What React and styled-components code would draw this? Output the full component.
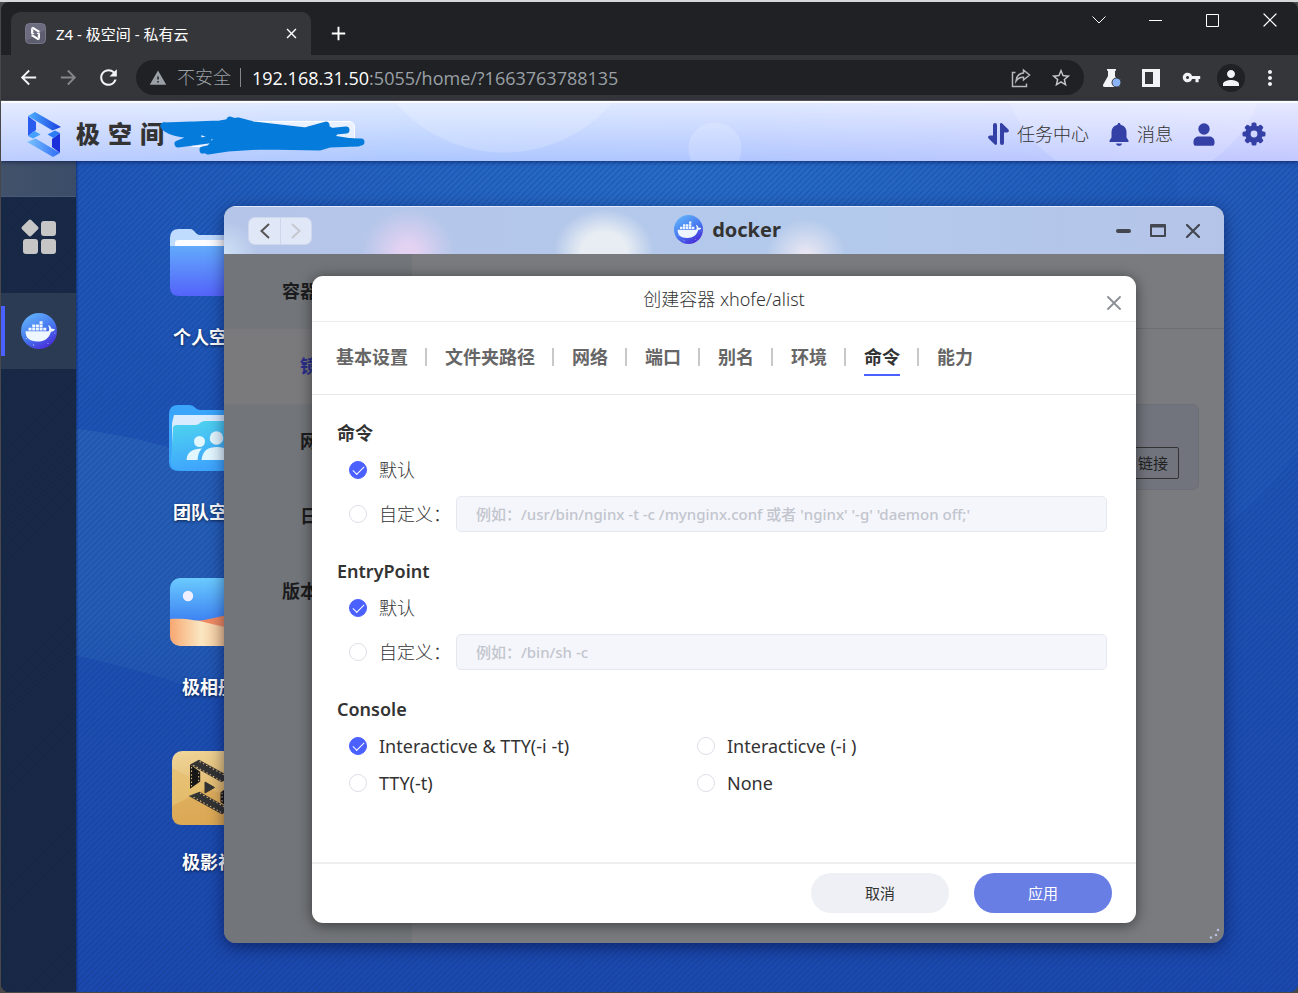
import React, { useState } from 'react';
import styled, { createGlobalStyle } from 'styled-components';
import {
  MdAdd,
  MdArrowBack,
  MdArrowForward,
  MdClose,
  MdMoreVert,
  MdPerson,
  MdRefresh,
  MdStarBorder,
  MdVpnKey,
  MdWarning,
} from 'react-icons/md';

const GlobalStyle = createGlobalStyle`
  * {
    box-sizing: border-box;
  }

  body {
    margin: 0;
    background: #48484a;
    color: #333;
    font-family: 'Noto Sans', 'Noto Sans CJK SC', sans-serif;
    font-size: 18px;
    line-height: 24px;
  }

  button,
  input {
    font: inherit;
    color: inherit;
  }

  button {
    padding: 0;
    border: none;
    background: none;
    cursor: pointer;
  }

  svg {
    display: block;
    flex: none;
  }
`;

/* ---------- browser ---------- */

const Screen = styled.div`
  display: flex;
  flex-direction: column;
  min-height: 100vh;
  padding: 0 0 1px 1px;
  border-top: 2px solid #d5d8d8;
`;

const Browser = styled.div`
  flex: 1;
  display: flex;
  flex-direction: column;
  overflow: hidden;
  border-radius: 8px;
  background: #202124;
`;

const TabStrip = styled.div`
  display: flex;
  align-items: flex-end;
  height: 53px;
  padding-left: 10px;
  color: #fff;
`;

const BrowserTab = styled.div`
  display: flex;
  align-items: center;
  width: 300px;
  height: 43px;
  padding: 0 12px 0 14px;
  border-radius: 9px 9px 0 0;
  background: #35363a;
`;

const TabTitle = styled.span`
  flex: 1;
  margin-left: 10px;
  font-size: 15px;
`;

const IconButton = styled.button`
  display: flex;
  align-items: center;
  justify-content: center;
  width: ${(p) => p.$width || 28}px;
  height: ${(p) => p.$height || 28}px;
  color: ${(p) => p.$color || 'inherit'};
`;

const NewTab = styled.div`
  display: flex;
  align-items: center;
  height: 43px;
  margin-left: 13px;
`;

const WindowControls = styled.div`
  display: flex;
  align-self: flex-start;
  margin-left: auto;
`;

const Toolbar = styled.div`
  display: flex;
  align-items: center;
  height: 46px;
  padding: 0 15px 0 13px;
  border-bottom: 1px solid #5c5d5f;
  background: #35363a;
  color: #f1f3f4;
`;

const NavButtons = styled.div`
  display: flex;
  gap: 12px;
`;

const AddressBar = styled.div`
  flex: 1;
  display: flex;
  align-items: center;
  height: 35px;
  margin: 0 13px 0 14px;
  padding: 0 9px 0 13px;
  border-radius: 18px;
  background: #202124;
  color: #9aa0a6;
  font-family: 'Open Sans', 'Noto Sans CJK SC', sans-serif;
  font-weight: 300;
`;

const Insecure = styled.span`
  margin-left: 10px;
  padding-right: 9px;
  border-right: 1px solid #80868b;
  line-height: 19px;
`;

const Url = styled.span`
  flex: 1;
  margin-left: 11px;
  font-weight: 400;
  b {
    color: #fff;
    font-weight: 400;
  }
`;

const Extensions = styled.div`
  display: flex;
  gap: 12px;
`;

const Avatar = styled.span`
  display: flex;
  align-items: center;
  justify-content: center;
  width: 28px;
  height: 28px;
  border-radius: 50%;
  background: #202124;
`;

/* ---------- NAS page ---------- */

const Header = styled.header`
  position: relative;
  display: flex;
  align-items: center;
  height: 60px;
  padding: 4px 32px 0 25px;
  border-top: 2px solid #fbfcff;
  background:
    radial-gradient(circle at 503px -93px, rgba(255, 255, 255, 0.18) 142px, transparent 143px),
    radial-gradient(circle at 714px 46px, rgba(255, 255, 255, 0.18) 26px, transparent 27px),
    radial-gradient(circle at calc(100% - 164px) -52px, rgba(255, 255, 255, 0.16) 134px, transparent 135px),
    linear-gradient(rgba(255, 255, 255, 0.6), rgba(255, 255, 255, 0)),
    linear-gradient(90deg, #bccdff 0%, #adc8ff 30%, #b0c6ff 55%, #c3c8ff 100%);
  box-shadow: 0 1px 4px rgba(0, 10, 60, 0.6);
  z-index: 2;
`;

const Brand = styled.div`
  display: flex;
  gap: 8px;
  margin-left: 14px;
  padding-bottom: 2px;
  color: #333;
  font-family: 'Noto Sans CJK SC', sans-serif;
  font-size: 24px;
  font-weight: 900;
`;

const DeviceName = styled.div`
  position: relative;
  width: 167px;
  height: 26px;
  margin-left: 24px;
  border: 1px solid #fff;
  border-radius: 6px;
  background: rgba(255, 255, 255, 0.6);
`;

const Scribble = styled.svg`
  position: absolute;
  left: -31px;
  top: -6px;
`;

const HeaderActions = styled.nav`
  display: flex;
  align-items: center;
  gap: 20px;
  margin-left: auto;
`;

const HeaderAction = styled.button`
  display: flex;
  align-items: center;
  gap: 8px;
  font-weight: 300;
  svg {
    color: #3440a5;
  }
  &:last-child {
    margin-left: 7px;
  }
`;

const Page = styled.div`
  flex: 1;
  display: flex;
`;

const Dock = styled.aside`
  display: flex;
  flex-direction: column;
  width: 75px;
  background:
    repeating-linear-gradient(135deg, transparent 0 3px, rgba(0, 0, 0, 0.06) 3px 4px),
    #182947;
  box-shadow: 1px 0 2px rgba(0, 0, 40, 0.4);
  z-index: 1;
`;

const DockTop = styled.div`
  height: 36px;
  border-bottom: 1px solid #45597a;
  background: linear-gradient(90deg, #42526b, #3a4c67);
`;

const DockApps = styled.button`
  display: flex;
  align-items: center;
  justify-content: center;
  height: 96px;
  padding-bottom: 16px;
`;

const DockItem = styled.button`
  display: flex;
  align-items: center;
  justify-content: center;
  height: 76px;
  background:
    linear-gradient(#4a60ff, #4a60ff) left center / 4px 50px no-repeat,
    #2c3b54;
`;

const Desktop = styled.main`
  position: relative;
  flex: 1;
  padding: 62px 0 0 93px;
  overflow: hidden;
  background: #1d50b4;
`;

const Wallpaper = styled.svg`
  position: absolute;
  left: 0;
  top: 0;
  width: 100%;
  height: 100%;
`;

const Shortcuts = styled.div`
  position: relative;
  display: flex;
  flex-direction: column;
  gap: 49px;
  width: 80px;
`;

const Shortcut = styled.button`
  display: flex;
  flex-direction: column;
  align-items: center;
  gap: 22px;
  color: #fff;
  font-weight: 700;
  white-space: nowrap;
  text-shadow: 0 1px 3px rgba(0, 0, 0, 0.6);
`;

/* ---------- docker window ---------- */

const AppWindow = styled.section`
  position: absolute;
  inset: 45px 74px 49px 148px;
  display: flex;
  flex-direction: column;
  overflow: hidden;
  border-radius: 12px;
  background: #797b7f;
`;

const WindowShadow = styled.div`
  position: absolute;
  inset: 45px 74px 49px 148px;
  border-radius: 12px;
  box-shadow: 0 4px 16px rgba(0, 0, 40, 0.5);
`;

const TitleBar = styled.div`
  display: grid;
  grid-template-columns: 1fr auto 1fr;
  align-items: center;
  height: 48px;
  padding: 0 18px 0 25px;
  border-top: 1px solid #dfe9fb;
  background:
    radial-gradient(ellipse 46px 44px at 184px 46px, #e3d2f2 20%, rgba(227, 210, 242, 0)),
    radial-gradient(ellipse 50px 42px at 380px 44px, #e8edf3 45%, rgba(232, 237, 243, 0)),
    radial-gradient(ellipse 40px 36px at 582px 48px, #e6e5f2 10%, rgba(230, 229, 242, 0)),
    radial-gradient(ellipse 34px 34px at 0 48px, #cfe2f5, rgba(207, 226, 245, 0)),
    linear-gradient(90deg, #b5c5e9, #b3caec 60%, #b4c4e8);
`;

const History = styled.div`
  display: flex;
  justify-self: start;
  border-radius: 6px;
  background: #e0e7f7;
  box-shadow: 0 0 0 1px #cfd9ee;
  button + button {
    border-left: 1px solid #cdd6ea;
  }
`;

const AppTitle = styled.h1`
  display: flex;
  align-items: center;
  gap: 9px;
  margin: 0;
  padding-bottom: 2px;
  font-size: 20px;
  font-weight: 700;
`;

const TitleButtons = styled.div`
  display: flex;
  gap: 9px;
  justify-self: end;
  color: #43474f;
`;

const WindowBody = styled.div`
  flex: 1;
  display: flex;
`;

const SideMenu = styled.nav`
  display: flex;
  flex-direction: column;
  width: 188px;
  background: #727579;
`;

const SideLink = styled.a`
  height: 75px;
  line-height: 75px;
  background: ${(p) => (p.$active ? '#7a7a7d' : 'transparent')};
  color: ${(p) => (p.$active ? '#2a2f8a' : '#1c1c1e')};
  font-weight: 700;
  text-align: center;
  text-decoration: none;
`;

const Content = styled.div`
  flex: 1;
  display: flex;
  flex-direction: column;
`;

const ContentBar = styled.div`
  height: 75px;
  border-bottom: 1px solid #6d6e71;
`;

const ImageCard = styled.div`
  display: flex;
  align-items: flex-end;
  justify-content: flex-end;
  height: 86px;
  margin: 75px 25px 0;
  padding: 10px 19px;
  border: 1px solid #6d6f76;
  border-radius: 6px;
  background: #71747c;
`;

const LinkButton = styled.button`
  height: 32px;
  padding: 0 10px;
  border: 1px solid #333;
  border-radius: 2px;
  color: #222;
  font-size: 15px;
`;

const ResizeGrip = styled.svg`
  position: absolute;
  right: 3px;
  bottom: 3px;
`;

/* ---------- create container dialog ---------- */

const Dialog = styled.div`
  position: absolute;
  inset: 70px 88px 20px;
  display: flex;
  flex-direction: column;
  border-radius: 11px;
  background: #fff;
  box-shadow: 0 2px 14px rgba(0, 0, 0, 0.5);
`;

const DialogHeader = styled.div`
  display: grid;
  grid-template-columns: 1fr auto 1fr;
  align-items: center;
  height: 46px;
  padding: 0 8px;
  border-bottom: 1px solid #ececee;
`;

const DialogTitle = styled.h2`
  grid-column: 2;
  margin: 0;
  font-size: 18px;
  font-weight: 300;
`;

const DialogClose = styled(IconButton)`
  justify-self: end;
  align-self: end;
`;

const Tabs = styled.div`
  display: flex;
  height: 73px;
  padding: 23px 24px 0;
  border-bottom: 1px solid #e8e8ea;
`;

const TabItem = styled.button`
  position: relative;
  height: 31px;
  padding-bottom: 5px;
  border-bottom: 2px solid ${(p) => (p.$active ? '#4a60ff' : 'transparent')};
  color: ${(p) => (p.$active ? '#333' : '#666')};
  font-weight: 700;
`;

const Divider = styled.span`
  width: 2px;
  height: 18px;
  margin: 3px 18px 0 17px;
  background: #c8c8c8;
`;

const Form = styled.form`
  flex: 1;
  display: flex;
  flex-direction: column;
`;

const Fields = styled.div`
  flex: 1;
  padding: 26px 29px 0 25px;
`;

const Group = styled.fieldset`
  min-width: 0;
  margin: 0 0 19px;
  padding: 0;
  border: none;
`;

const GroupTitle = styled.legend`
  margin-bottom: 7px;
  padding: 0;
  font-weight: 600;
`;

const OptionRow = styled.div`
  display: flex;
  align-items: center;
  height: 36px;
  margin-bottom: 8px;
  padding-left: 12px;
`;

const ConsoleGrid = styled.div`
  display: grid;
  grid-template-columns: 348px 1fr;
  row-gap: 1px;
  padding-left: 12px;
`;

const RadioLabel = styled.label`
  display: flex;
  align-items: center;
  gap: 12px;
  min-width: ${(p) => p.$width || 0}px;
  height: 36px;
  font-weight: ${(p) => p.$weight || 300};
`;

const Radio = styled.input`
  display: grid;
  place-items: center;
  appearance: none;
  width: 18px;
  height: 18px;
  margin: 0;
  border: 1px solid #dddfe6;
  border-radius: 50%;
  background: #fff;

  &:checked {
    border-color: #4a60ff;
    background: #4a60ff;
  }

  &:checked::after {
    content: '';
    width: 10px;
    height: 5px;
    margin-bottom: 3px;
    border: solid #fff;
    border-width: 0 0 1px 1px;
    transform: rotate(-45deg);
  }
`;

const TextInput = styled.input`
  flex: 1;
  min-width: 0;
  height: 36px;
  padding: 0 19px;
  border: 1px solid #e6e8f0;
  border-radius: 5px;
  background: #f5f6fb;
  font-size: 15px;
  font-weight: 500;

  &::placeholder {
    color: #c2c5ce;
    opacity: 1;
  }
`;

const DialogFooter = styled.div`
  display: flex;
  align-items: center;
  justify-content: flex-end;
  gap: 25px;
  height: 61px;
  padding: 0 24px 1px 0;
  border-top: 2px solid #eeeeef;
`;

const PillButton = styled.button`
  width: 138px;
  height: 40px;
  border-radius: 20px;
  background: ${(p) => (p.$primary ? '#687ee4' : '#eff0f5')};
  color: ${(p) => (p.$primary ? '#fff' : '#333')};
  font-size: 15px;
`;

/* ---------- drawings ---------- */

const LogoHalf = ({ band, side, foot }) => (
  <>
    <path d="M2 5 10 11V19L2 25Z" fill={side} />
    <path d="M2 25 8.500 20 14.500 23.500 7 27.500Z" fill={foot} />
    <path d="M2 5 9 1 35 16 26.500 19.500Z" fill={band} />
  </>
);

const Logo = () => (
  <svg width="36" height="47" viewBox="0 0 36 47">
    <defs>
      <linearGradient id="logoBand">
        <stop offset="0" stopColor="#4eb0ff" />
        <stop offset="1" stopColor="#1a3fe0" />
      </linearGradient>
      <linearGradient id="logoBand2">
        <stop offset="0" stopColor="#2f6cf5" />
        <stop offset="1" stopColor="#7cc4ff" />
      </linearGradient>
    </defs>
    <LogoHalf band="url(#logoBand)" side="#2a5cf0" foot="#46a0ff" />
    <g transform="rotate(180 18 23.500)">
      <LogoHalf band="url(#logoBand2)" side="#1b30d8" foot="#2d7cf4" />
    </g>
  </svg>
);

const Favicon = () => (
  <svg width="21" height="21" viewBox="0 0 21 21">
    <rect x="0.500" y="0.500" width="20" height="20" rx="4" fill="#5d5d70" stroke="#77778a" />
    <path d="M1 1h19v6L1 18z" fill="#77778c" opacity="0.6" />
    <g transform="translate(5.500 3.500) scale(0.28 0.3)">
      <LogoHalf band="#fff" side="#fff" foot="#fff" />
      <g transform="rotate(180 18 23.500)">
        <LogoHalf band="#fff" side="#fff" foot="#fff" />
      </g>
    </g>
  </svg>
);

const DockerLogo = ({ size, id }) => (
  <svg width={size} height={size} viewBox="0 0 36 36">
    <defs>
      <linearGradient id={id} x1="0.2" y1="0" x2="0.8" y2="1">
        <stop offset="0" stopColor="#62b4fb" />
        <stop offset="0.55" stopColor="#4574ee" />
        <stop offset="1" stopColor="#4a22d6" />
      </linearGradient>
    </defs>
    <circle cx="18" cy="18" r="18" fill={`url(#${id})`} />
    <g fill="#eef6ff">
      <path d="M4.500 18.300H27.500C28.300 17.500 28.300 16.200 28 15L27.200 12 29 13C29.800 13.800 30 14.800 30.200 15.500L34 16.200C33.500 17.800 32 18.500 30 18.700 28 25.500 23.500 28.500 16.500 28.500 8.500 28.500 4.500 25 4.500 18.300Z" />
      <path d="M7.500 14.700h3v2.800h-3zM11.200 14.700h3v2.800h-3zM14.900 14.700h3v2.800h-3zM18.600 14.700h3v2.800h-3zM22.300 14.700h3v2.800h-3zM11.200 11.400h3v2.800h-3zM14.900 11.400h3v2.800h-3zM18.600 11.400h3v2.800h-3zM18.600 8.200h3V11h-3z" />
      <g opacity="0.6">
        <circle cx="5.500" cy="25.500" r="0.600" />
        <circle cx="12.500" cy="32" r="0.700" />
        <circle cx="27" cy="30.500" r="0.600" />
        <circle cx="34" cy="20" r="0.600" />
      </g>
    </g>
  </svg>
);

const AppsIcon = () => (
  <svg width="36" height="36" viewBox="0 0 36 36" fill="#c6c6c6">
    <rect x="2.500" y="2.500" width="13" height="13" rx="2" transform="rotate(45 9 9)" />
    <rect x="20" y="2" width="15" height="15" rx="3" />
    <rect x="2" y="20" width="15" height="15" rx="3" />
    <rect x="20" y="20" width="15" height="15" rx="3" />
  </svg>
);

const ShareIcon = () => (
  <svg width="20" height="20" viewBox="0 0 20 20" fill="none" stroke="#b5b8bc" strokeWidth="1.500">
    <path d="M4.500 4.500H1.500V18.500H15.500V15.500" />
    <path d="M12.500 2 18.500 7 12.500 12V9.300C9.500 9 7 10.200 5 13.200 5.300 9 7.500 5.300 12.500 4.900Z" />
  </svg>
);

const FlaskIcon = () => (
  <svg width="19" height="20" viewBox="0 0 19 20">
    <path d="M5 1H14V2.800H13V8L17.500 16.500C18 18 17.500 19 16 19H3C1 19 0.500 18 1.200 16.500L6 8V2.800H5Z" fill="#f1f3f4" />
    <circle cx="14.500" cy="14.500" r="4.500" fill="#8ab4f8" stroke="#35363a" />
  </svg>
);

const SidePanelIcon = () => (
  <svg width="18" height="18" viewBox="0 0 18 18">
    <path d="M0 0H18V18H0ZM3 3V15H11V3Z" fill="#f1f3f4" fillRule="evenodd" />
  </svg>
);

const TransferIcon = () => (
  <svg width="21" height="22" viewBox="0 0 21 22" fill="currentColor">
    <path d="M5 2a2 2 0 0 1 4 0V20.500C9 22 7.500 22.300 6.500 21.300L0.600 15.500C-0.500 14 0.500 12.500 2 12.500H5Z" />
    <path d="M12 1.500C12 0 13.500-.3 14.500.7L20.400 6.500C21.500 8 20.500 9.500 19 9.500H16V20a2 2 0 0 1-4 0Z" />
  </svg>
);

const BellIcon = () => (
  <svg width="20" height="23" viewBox="0 0 20 23" fill="currentColor">
    <path d="M10 0C11 0 11.500.7 11.500 1.700 15.500 2.500 17.500 5.500 17.500 9.500V14.500L19.500 17.500V19H.5V17.500L2.500 14.500V9.500C2.500 5.500 4.500 2.500 8.500 1.700 8.500.7 9 0 10 0Z" />
    <path d="M7 20.500H13C12.700 22 11.500 22.800 10 22.800S7.300 22 7 20.500Z" />
  </svg>
);

const UserIcon = () => (
  <svg width="22" height="23" viewBox="0 0 22 23" fill="currentColor">
    <circle cx="11" cy="6" r="5.700" />
    <path d="M0.500 20V18.500C.5 15.500 3 13.500 6 13.500H16C19 13.500 21.500 15.500 21.500 18.500V20C21.500 22 20.500 22.800 19 22.800H3C1.500 22.800.5 22 .5 20Z" />
  </svg>
);

const GearIcon = () => (
  <svg width="24" height="24" viewBox="-12 -12 24 24">
    {[0, 45, 90, 135].map((deg) => (
      <rect key={deg} x="-2.500" y="-11.500" width="5" height="23" rx="1.600" fill="currentColor" transform={`rotate(${deg})`} />
    ))}
    <circle r="8.800" fill="currentColor" />
    <circle r="3.400" fill="#d3d7ff" />
  </svg>
);

const CrossIcon = ({ size, stroke = 2 }) => (
  <svg width={size} height={size} viewBox="0 0 14 14" stroke="currentColor" strokeWidth={stroke} strokeLinecap="round">
    <path d="M1 1 13 13M13 1 1 13" />
  </svg>
);

const ChevronIcon = ({ flip, color }) => (
  <svg width="10" height="16" viewBox="0 0 10 16" fill="none" stroke={color} strokeWidth="2">
    <path d={flip ? 'M1 1 8.500 8 1 15' : 'M9 1 1.500 8 9 15'} />
  </svg>
);

const FolderIcon = () => (
  <svg width="80" height="80" viewBox="0 0 80 80">
    <defs>
      <linearGradient id="folderFront" x2="0" y2="1">
        <stop offset="0" stopColor="#62aafb" />
        <stop offset="1" stopColor="#5463fa" />
      </linearGradient>
    </defs>
    <path d="M1 15Q1 6 10 6H21C26 6 26 12 31 12H72Q79 12 79 20V50H1Z" fill="#bfdcff" />
    <rect x="6" y="17" width="70" height="20" rx="3" fill="#fbfcff" />
    <path d="M1 23H79V65Q79 73 71 73H10Q1 73 1 64Z" fill="url(#folderFront)" />
  </svg>
);

const TeamFolderIcon = () => (
  <svg width="80" height="80" viewBox="0 0 80 80">
    <defs>
      <linearGradient id="teamFront" x2="0.3" y2="1">
        <stop offset="0" stopColor="#4fd6ee" />
        <stop offset="1" stopColor="#3fa5fd" />
      </linearGradient>
    </defs>
    <path d="M0 16Q0 7 9 7H20C26 7 26 12 32 12H72Q79 12 79 20V65Q79 73 70 73H10Q0 73 0 64Z" fill="#3aa5fb" />
    <path d="M5 17H76V60H3V25Z" fill="#d9ebff" />
    <path d="M4 30Q4 27 8 27H26C31 27 31 23 36 23H79V65Q79 72 71 72H11Q1 72 2 62Z" fill="url(#teamFront)" />
    <g fill="#e2f6fe">
      <circle cx="30.500" cy="43.500" r="5.500" />
      <circle cx="47.500" cy="40" r="6.800" />
      <path d="M17.500 62C18 54 24 50.500 33 50.500 30 53 29 57 28.500 62ZM32.500 62C34 52 39 49 48 49S63 52 64 62Z" />
    </g>
  </svg>
);

const PhotosIcon = () => (
  <svg width="80" height="80" viewBox="0 0 80 80">
    <defs>
      <linearGradient id="sky" x2="0" y2="1">
        <stop offset="0" stopColor="#70d3ff" />
        <stop offset="0.6" stopColor="#3d82f3" />
      </linearGradient>
      <linearGradient id="sand">
        <stop offset="0" stopColor="#f7a56e" />
        <stop offset="0.4" stopColor="#fbe7c2" />
        <stop offset="0.8" stopColor="#eeb580" />
      </linearGradient>
      <clipPath id="photoClip">
        <rect x="1" y="5" width="78" height="68" rx="10" />
      </clipPath>
    </defs>
    <g clipPath="url(#photoClip)">
      <rect width="80" height="80" fill="url(#sky)" />
      <path d="M20 48C40 48 50 42 80 38V70Z" fill="#ef8a62" />
      <path d="M0 46C30 44 45 54 80 58V80H0Z" fill="url(#sand)" />
      <circle cx="19" cy="23" r="5.200" fill="#eef0ff" />
    </g>
  </svg>
);

const FilmHalf = () => (
  <>
    <LogoHalf band="#333" side="#161616" foot="none" />
    <g fill="none" stroke="#e5c27c" strokeWidth="0.800" strokeDasharray="1.200 1.800">
      <path d="M9.500 2.500 33 16M4.500 5.500 27 18.800M3.200 7V23M8.800 11.500V19" />
    </g>
  </>
);

const MoviesIcon = () => (
  <svg width="80" height="80" viewBox="0 0 80 80">
    <defs>
      <linearGradient id="gold" x2="0.3" y2="1">
        <stop offset="0" stopColor="#f0d79b" />
        <stop offset="1" stopColor="#dba956" />
      </linearGradient>
    </defs>
    <rect x="3" y="3" width="74" height="74" rx="10" fill="url(#gold)" />
    <path d="M3 20 30 34 50 42 3 58Z" fill="#e6bd6d" opacity="0.7" />
    <path d="M3 58 38 40 77 56V67Q77 77 67 77H13Q3 77 3 67Z" fill="#dba854" opacity="0.7" />
    <g transform="translate(18.500 10.500) scale(1.270 1.210)">
      <FilmHalf />
      <g transform="rotate(180 18 23.500)">
        <FilmHalf />
      </g>
    </g>
    <path d="M36 34 45.500 39.500 36 45Z" fill="#333" stroke="#333" strokeLinejoin="round" />
  </svg>
);

const tabs = ['基本设置', '文件夹路径', '网络', '端口', '别名', '环境', '命令', '能力'];

const menu = ['容器管理', '镜像', '网络', '日志', '版本信息'];

const shortcuts = [
  { label: '个人空间', Icon: FolderIcon },
  { label: '团队空间', Icon: TeamFolderIcon },
  { label: '极相册', Icon: PhotosIcon },
  { label: '极影视', Icon: MoviesIcon },
];

const consoleModes = ['Interacticve & TTY(-i -t)', 'Interacticve (-i )', 'TTY(-t)', 'None'];

const CommandGroup = ({ name, title, placeholder }) => {
  const [mode, setMode] = useState('default');
  const [value, setValue] = useState('');

  return (
    <Group>
      <GroupTitle>{title}</GroupTitle>
      <OptionRow>
        <RadioLabel>
          <Radio type="radio" name={name} checked={mode === 'default'} onChange={() => setMode('default')} />
          默认
        </RadioLabel>
      </OptionRow>
      <OptionRow>
        <RadioLabel $width={107}>
          <Radio type="radio" name={name} checked={mode === 'custom'} onChange={() => setMode('custom')} />
          自定义：
        </RadioLabel>
        <TextInput
          type="text"
          aria-label={title}
          placeholder={placeholder}
          value={value}
          onChange={(e) => setValue(e.target.value)}
        />
      </OptionRow>
    </Group>
  );
};

const CreateDialog = () => {
  const [tab, setTab] = useState('命令');
  const [consoleMode, setConsoleMode] = useState(consoleModes[0]);

  return (
    <Dialog role="dialog" aria-labelledby="dialog-title">
      <DialogHeader>
        <DialogTitle id="dialog-title">创建容器 xhofe/alist</DialogTitle>
        <DialogClose aria-label="关闭" $color="#8b8e95" $height={36}>
          <CrossIcon size={14} stroke={1.8} />
        </DialogClose>
      </DialogHeader>
      <Tabs role="tablist">
        {tabs.map((name, i) => (
          <React.Fragment key={name}>
            {i > 0 && <Divider />}
            <TabItem role="tab" aria-selected={tab === name} $active={tab === name} onClick={() => setTab(name)}>
              {name}
            </TabItem>
          </React.Fragment>
        ))}
      </Tabs>
      <Form onSubmit={(e) => e.preventDefault()}>
        <Fields>
          <CommandGroup
            name="command"
            title="命令"
            placeholder="例如：/usr/bin/nginx -t -c /mynginx.conf 或者 'nginx' '-g' 'daemon off;'"
          />
          <CommandGroup name="entrypoint" title="EntryPoint" placeholder="例如：/bin/sh -c" />
          <Group>
            <GroupTitle>Console</GroupTitle>
            <ConsoleGrid>
              {consoleModes.map((mode) => (
                <RadioLabel key={mode} $weight={400}>
                  <Radio
                    type="radio"
                    name="console"
                    checked={consoleMode === mode}
                    onChange={() => setConsoleMode(mode)}
                  />
                  {mode}
                </RadioLabel>
              ))}
            </ConsoleGrid>
          </Group>
        </Fields>
        <DialogFooter>
          <PillButton type="button">取消</PillButton>
          <PillButton type="submit" $primary>
            应用
          </PillButton>
        </DialogFooter>
      </Form>
    </Dialog>
  );
};

const DockerWindow = () => (
  <AppWindow>
    <TitleBar>
      <History>
        <IconButton aria-label="后退" $width={31} $height={26}>
          <ChevronIcon color="#555" />
        </IconButton>
        <IconButton aria-label="前进" $width={31} $height={26}>
          <ChevronIcon flip color="#c5c8cf" />
        </IconButton>
      </History>
      <AppTitle>
        <DockerLogo size={29} id="dockerTitle" />
        docker
      </AppTitle>
      <TitleButtons>
        <IconButton aria-label="最小化" $width={26}>
          <svg width="15" height="4" viewBox="0 0 15 4">
            <rect width="15" height="4" rx="2" fill="currentColor" />
          </svg>
        </IconButton>
        <IconButton aria-label="最大化" $width={26}>
          <svg width="16" height="13" viewBox="0 0 16 13">
            <path d="M1 1H15V12H1ZM1 2.500H15" fill="none" stroke="currentColor" strokeWidth="2" strokeLinejoin="round" />
          </svg>
        </IconButton>
        <IconButton aria-label="关闭" $width={26}>
          <CrossIcon size={14} stroke={2.2} />
        </IconButton>
      </TitleButtons>
    </TitleBar>
    <WindowBody>
      <SideMenu>
        {menu.map((name) => (
          <SideLink key={name} href="#" $active={name === '镜像'}>
            {name}
          </SideLink>
        ))}
      </SideMenu>
      <Content>
        <ContentBar />
        <ImageCard>
          <LinkButton>链接</LinkButton>
        </ImageCard>
      </Content>
    </WindowBody>
    <ResizeGrip width="12" height="12" viewBox="0 0 12 12" fill="#b9bedb">
      <circle cx="9" cy="2" r="1.300" />
      <circle cx="7" cy="7" r="1.300" />
      <circle cx="2" cy="9.500" r="1.300" />
    </ResizeGrip>
    <CreateDialog />
  </AppWindow>
);

const App = () => (
  <Screen>
    <GlobalStyle />
    <Browser>
      <TabStrip>
        <BrowserTab>
          <Favicon />
          <TabTitle>Z4 - 极空间 - 私有云</TabTitle>
          <IconButton aria-label="关闭标签页" $width={16}>
            <MdClose size={17} />
          </IconButton>
        </BrowserTab>
        <NewTab>
          <IconButton aria-label="新标签页">
            <MdAdd size={23} />
          </IconButton>
        </NewTab>
        <WindowControls>
          <IconButton aria-label="标签页列表" $width={57} $height={36}>
            <svg width="14" height="8" viewBox="0 0 14 8" fill="none" stroke="#fff">
              <path d="M0.500 0.500 7 7 13.500 0.500" />
            </svg>
          </IconButton>
          <IconButton aria-label="最小化" $width={57} $height={36}>
            <svg width="13" height="1" viewBox="0 0 13 1">
              <rect width="13" height="1" fill="#fff" />
            </svg>
          </IconButton>
          <IconButton aria-label="最大化" $width={57} $height={36}>
            <svg width="13" height="13" viewBox="0 0 13 13" fill="none" stroke="#fff">
              <path d="M0.500 0.500H12.500V12.500H0.500Z" />
            </svg>
          </IconButton>
          <IconButton aria-label="关闭" $width={57} $height={36}>
            <CrossIcon size={14} stroke={1.2} />
          </IconButton>
        </WindowControls>
      </TabStrip>
      <Toolbar>
        <NavButtons>
          <IconButton aria-label="后退">
            <MdArrowBack size={23} />
          </IconButton>
          <IconButton aria-label="前进" $color="#85868a">
            <MdArrowForward size={23} />
          </IconButton>
          <IconButton aria-label="刷新">
            <MdRefresh size={25} />
          </IconButton>
        </NavButtons>
        <AddressBar>
          <MdWarning size={18} />
          <Insecure>不安全</Insecure>
          <Url>
            <b>192.168.31.50</b>:5055/home/?1663763788135
          </Url>
          <IconButton aria-label="分享" $width={52}>
            <ShareIcon />
          </IconButton>
          <IconButton aria-label="收藏" $color="#c4c7cb">
            <MdStarBorder size={22} />
          </IconButton>
        </AddressBar>
        <Extensions>
          <IconButton aria-label="实验">
            <FlaskIcon />
          </IconButton>
          <IconButton aria-label="侧边栏">
            <SidePanelIcon />
          </IconButton>
          <IconButton aria-label="密码">
            <MdVpnKey size={19} />
          </IconButton>
          <Avatar>
            <MdPerson size={24} />
          </Avatar>
          <IconButton aria-label="更多" $width={26}>
            <MdMoreVert size={24} />
          </IconButton>
        </Extensions>
      </Toolbar>
      <Header>
        <Logo />
        <Brand>
          <span>极</span>
          <span>空</span>
          <span>间</span>
        </Brand>
        <DeviceName>
          <Scribble width="210" height="40" viewBox="0 0 210 40">
            <g fill="#057bdb" stroke="#057bdb" strokeWidth="7" strokeLinejoin="round" strokeLinecap="round">
              <path d="M6 10 62 8 80 5 95 9 148 15 166 11 176 17 168 22 200 27 172 28 162 31 104 30 70 32 50 35 60 22 40 14 20 11Z" />
              <path d="M72 4 98 13M150 14 168 9M168 16 188 14M162 25 203 26" />
              <path d="M6 10C10 17 28 18 40 20L20 28 50 24M45 34 85 26" fill="none" />
            </g>
          </Scribble>
        </DeviceName>
        <HeaderActions>
          <HeaderAction>
            <TransferIcon />
            任务中心
          </HeaderAction>
          <HeaderAction>
            <BellIcon />
            消息
          </HeaderAction>
          <HeaderAction aria-label="用户">
            <UserIcon />
          </HeaderAction>
          <HeaderAction aria-label="设置">
            <GearIcon />
          </HeaderAction>
        </HeaderActions>
      </Header>
      <Page>
        <Dock>
          <DockTop />
          <DockApps aria-label="应用">
            <AppsIcon />
          </DockApps>
          <DockItem aria-label="docker">
            <DockerLogo size={36} id="dockerDock" />
          </DockItem>
        </Dock>
        <Desktop>
          <Wallpaper viewBox="0 0 1221 832" preserveAspectRatio="none">
            <defs>
              <radialGradient id="glow" cx="0.5" cy="0" r="0.5">
                <stop offset="0" stopColor="#2b76cf" stopOpacity="0.7" />
                <stop offset="1" stopColor="#2b76cf" stopOpacity="0" />
              </radialGradient>
              <linearGradient id="band" x2="0" y2="1">
                <stop offset="0" stopColor="#2d67bb" stopOpacity="0.6" />
                <stop offset="0.5" stopColor="#2a66b8" stopOpacity="0.6" />
                <stop offset="1" stopColor="#2450b0" stopOpacity="0.2" />
              </linearGradient>
              <pattern id="stripes" width="6" height="6" patternUnits="userSpaceOnUse">
                <path d="M-1 1 1-1M0 6 6 0M5 7 7 5" stroke="#0c3478" strokeOpacity="0.35" />
              </pattern>
              <linearGradient id="base" x2="0" y2="1">
                <stop offset="0" stopColor="#1f57b9" />
                <stop offset="0.5" stopColor="#1d50b3" />
                <stop offset="1" stopColor="#1b48ae" />
              </linearGradient>
            </defs>
            <rect width="1221" height="832" fill="url(#base)" />
            <rect width="1221" height="832" fill="url(#glow)" />
            <path d="M0 268C180 290 330 380 400 640 260 580 120 520 0 495Z" fill="url(#band)" />
            <path d="M1221 0V290Q1180 350 1100 400V0Z" fill="#2b62c4" fillOpacity="0.25" />
            <rect width="1221" height="832" fill="url(#stripes)" />
          </Wallpaper>
          <Shortcuts>
            {shortcuts.map(({ label, Icon }) => (
              <Shortcut key={label}>
                <Icon />
                {label}
              </Shortcut>
            ))}
          </Shortcuts>
          <WindowShadow />
          <DockerWindow />
        </Desktop>
      </Page>
    </Browser>
  </Screen>
);

export default App;
